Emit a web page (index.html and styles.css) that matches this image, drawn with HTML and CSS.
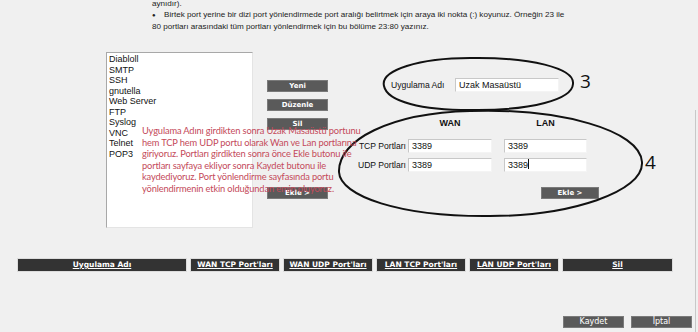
FILE: index.html
```html
<!DOCTYPE html>
<html lang="tr">
<head>
<meta charset="utf-8">
<title>Port Yönlendirme</title>
<link rel="stylesheet" href="styles.css">
</head>
<body>
<div class="page">
  <div class="intro">
    <p class="intro-line">aynıdır).</p>
    <p class="intro-line"><span class="bullet">●</span>Birtek port yerine bir dizi port yönlendirmede port aralığı belirtmek için araya iki nokta (:) koyunuz. Örneğin 23 ile</p>
    <p class="intro-line">80 portları arasındaki tüm portları yönlendirmek için bu bölüme 23:80 yazınız.</p>
  </div>

  <div class="main">
    <div class="listbox">
      <div class="opt">Diabloll</div>
      <div class="opt">SMTP</div>
      <div class="opt">SSH</div>
      <div class="opt">gnutella</div>
      <div class="opt">Web Server</div>
      <div class="opt">FTP</div>
      <div class="opt">Syslog</div>
      <div class="opt">VNC</div>
      <div class="opt">Telnet</div>
      <div class="opt">POP3</div>
    </div>

    <div class="btn-col">
      <div class="btn">Yeni</div>
      <div class="btn">Düzenle</div>
      <div class="btn">Sil</div>
      <div class="btn btn-ekle">Ekle &gt;</div>
    </div>

    <div class="form">
      <div class="app-row">
        <span class="lbl">Uygulama Adı</span>
        <div class="input input-app">Uzak Masaüstü</div>
      </div>
      <div class="ports">
        <span></span>
        <span class="col-h">WAN</span>
        <span class="col-h">LAN</span>
        <span class="lbl lbl-r">TCP Portları</span>
        <div class="input">3389</div>
        <div class="input">3389</div>
        <span class="lbl lbl-r">UDP Portları</span>
        <div class="input">3389</div>
        <div class="input">3389<span class="caret"></span></div>
      </div>
      <div class="form-foot">
        <div class="btn btn-wide">Ekle &gt;</div>
      </div>
    </div>
  </div>

  <div class="thead">
    <div class="th th-app">Uygulama Adı</div>
    <div class="th th-port">WAN TCP Port'ları</div>
    <div class="th th-port">WAN UDP Port'ları</div>
    <div class="th th-port">LAN TCP Port'ları</div>
    <div class="th th-port">LAN UDP Port'ları</div>
    <div class="th th-sil">Sil</div>
  </div>

  <div class="footer">
    <div class="btn btn-foot">Kaydet</div>
    <div class="btn btn-foot">İptal</div>
  </div>

  <svg class="marks" width="698" height="332" viewBox="0 0 698 332">
    <path d="M384 86 C380 70 420 58 470 58 C530 57 575 68 573 84 C572 100 530 110 478 110 C420 111 387 101 384 86 Z" fill="none" stroke="#111" stroke-width="2"/>
    <path d="M470 111 C560 108 640 130 642 162 C644 192 570 216 490 216 C400 217 340 196 339 172 C338 140 390 113 470 111 Z" fill="none" stroke="#111" stroke-width="2"/>
  </svg>
  <span class="num num3">3</span>
  <span class="num num4">4</span>

  <p class="note">Uygulama Adını girdikten sonra Uzak Masaüstü portunu<br>hem TCP hem UDP portu olarak Wan ve Lan portlarına<br>giriyoruz. Portları girdikten sonra önce Ekle butonu ile<br>portları sayfaya ekliyor sonra Kaydet butonu ile<br>kaydediyoruz. Port yönlendirme sayfasında portu<br>yönlendirmenin etkin olduğundan emin oluyoruz.</p>
</div>
</body>
</html>
```

FILE: styles.css
```css
* { box-sizing: border-box; }

html, body {
  margin: 0;
  padding: 0;
  background: #f0f0f0;
}

.page {
  position: relative;
  width: 698px;
  height: 332px;
  overflow: hidden;
  font-family: "Liberation Sans", Arial, sans-serif;
  color: #111;
}

.page::after {
  content: "";
  position: absolute;
  left: 695px;
  top: 110px;
  width: 1px;
  height: 222px;
  background: #c8c8c8;
}

.intro {
  padding-left: 152px;
  margin-top: -2px;
  font-size: 8.1px;
  line-height: 11px;
  color: #222;
}

.intro-line { margin: 0; }

.bullet {
  display: inline-block;
  width: 12px;
  font-size: 6px;
}

.main {
  display: flex;
  margin-top: 20px;
  height: 176px;
}

.listbox {
  margin-left: 106px;
  width: 147px;
  height: 176px;
  background: #fff;
  border-top: 1px solid #a8a8a8;
  border-left: 1px solid #a8a8a8;
  border-right: 1px solid #e4e4e4;
  border-bottom: 1px solid #e4e4e4;
  padding: 1px 2px;
  font-size: 9px;
  line-height: 10.5px;
  color: #111;
}

.btn-col {
  display: flex;
  flex-direction: column;
  margin-left: 14px;
  padding-top: 28px;
  width: 61px;
}

.btn {
  height: 12px;
  background: #5a5a5a;
  border: 1px solid #7a7a7a;
  color: #fff;
  font-family: "DejaVu Sans", Verdana, sans-serif;
  font-weight: bold;
  font-size: 7px;
  line-height: 10px;
  text-align: center;
}

.btn-col .btn + .btn { margin-top: 7px; }
.btn-col .btn-ekle { margin-top: 57px !important; }

.form {
  display: flex;
  flex-direction: column;
  margin-left: 22px;
  width: 260px;
}

.app-row {
  display: flex;
  align-items: center;
  margin-top: 26px;
  padding-left: 41px;
  height: 14px;
}

.lbl {
  font-size: 8.6px;
  color: #111;
}

.app-row .lbl { width: 64px; }

.input {
  height: 14px;
  background: #fff;
  border-top: 1px solid #c8c8c8;
  border-left: 1px solid #c8c8c8;
  border-right: 1px solid #f4f4f4;
  border-bottom: 1px solid #f4f4f4;
  font-size: 9px;
  line-height: 12px;
  padding-left: 3px;
  color: #111;
}

.input-app { width: 104px; }

.ports {
  display: grid;
  grid-template-columns: 58px 84px 95px;
  row-gap: 5px;
  margin-top: 25px;
}

.ports .input:nth-child(3n) { margin-left: 12px; width: 83px; }

.col-h {
  font-weight: bold;
  font-size: 9px;
  text-align: center;
  line-height: 12px;
  margin-bottom: 5px;
}

.ports .col-h:nth-child(3) { padding-left: 12px; }

.lbl-r {
  text-align: right;
  padding-right: 2px;
  line-height: 14px;
}

.caret {
  display: inline-block;
  width: 1px;
  height: 10px;
  background: #111;
  vertical-align: -1px;
}

.form-foot {
  display: flex;
  justify-content: flex-end;
  margin-top: 15px;
  padding-right: 11px;
}

.btn-wide { width: 58px; }

.thead {
  display: flex;
  gap: 3px;
  margin-top: 30px;
  padding-left: 17px;
}

.th {
  height: 14px;
  background: #333;
  border: 1px solid #dcdcdc;
  color: #fff;
  font-family: "DejaVu Sans", Verdana, sans-serif;
  font-weight: bold;
  font-size: 7.5px;
  line-height: 12px;
  text-align: center;
  text-decoration: underline;
  white-space: nowrap;
}

.th-app { width: 170px; }
.th-port { width: 90px; }
.th-sil { width: 111px; }

.footer {
  display: flex;
  justify-content: flex-end;
  gap: 7px;
  margin-top: 44px;
  padding-right: 6px;
}

.btn-foot {
  width: 61px;
  font-weight: normal;
  font-size: 8px;
}

.marks {
  position: absolute;
  left: 0;
  top: 0;
  pointer-events: none;
}

.num {
  position: absolute;
  font-family: "Open Sans", sans-serif;
  font-size: 19px;
  line-height: 19px;
  color: #111;
}

.num3 { left: 580px; top: 72px; }
.num4 { left: 645px; top: 153px; }

.note {
  position: absolute;
  left: 142px;
  top: 125px;
  margin: 0;
  font-family: Lato, "Open Sans", sans-serif;
  font-size: 9.3px;
  letter-spacing: -0.15px;
  line-height: 11.6px;
  color: #c44a5a;
  white-space: nowrap;
}
```
